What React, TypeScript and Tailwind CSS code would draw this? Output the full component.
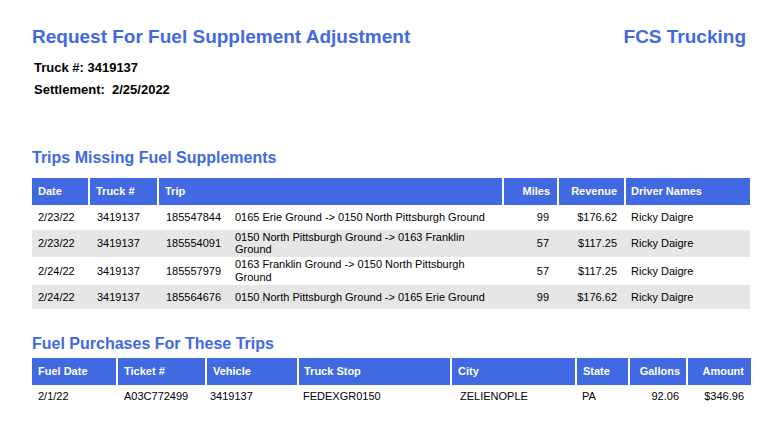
import React from "react";

const trips = [
  { date: "2/23/22", truck: "3419137", id: "185547844", route: "0165 Erie Ground -> 0150 North Pittsburgh Ground", miles: "99", revenue: "$176.62", driver: "Ricky Daigre" },
  { date: "2/23/22", truck: "3419137", id: "185554091", route: "0150 North Pittsburgh Ground -> 0163 Franklin Ground", miles: "57", revenue: "$117.25", driver: "Ricky Daigre" },
  { date: "2/24/22", truck: "3419137", id: "185557979", route: "0163 Franklin Ground -> 0150 North Pittsburgh Ground", miles: "57", revenue: "$117.25", driver: "Ricky Daigre" },
  { date: "2/24/22", truck: "3419137", id: "185564676", route: "0150 North Pittsburgh Ground -> 0165 Erie Ground", miles: "99", revenue: "$176.62", driver: "Ricky Daigre" },
];

const purchases = [
  { date: "2/1/22", ticket: "A03C772499", vehicle: "3419137", stop: "FEDEXGR0150", city: "ZELIENOPLE", state: "PA", gallons: "92.06", amount: "$346.96" },
];

const th = "h-[27px] bg-[#4169e1] text-white font-bold text-[11px] align-middle p-0";
const sep = "border-l-2 border-white";

export default function App() {
  return (
    <div className="min-h-[448px] bg-white pl-[32px] pt-[26px] text-black font-['Liberation_Sans',Arial,sans-serif]">
      <div className="flex justify-between pr-[30px] text-[19px] leading-[22px] font-bold text-[#4169e1]">
        <h1>Request For Fuel Supplement Adjustment</h1>
        <div>FCS Trucking</div>
      </div>

      <div className="mt-[9px] pl-[2px] text-[13px] leading-[22px] font-bold">
        <div>Truck #: 3419137</div>
        <div>Settlement:&nbsp; 2/25/2022</div>
      </div>

      <h2 className="mt-[47px] mb-[10px] text-[16px] leading-[20px] font-bold text-[#4169e1]">
        Trips Missing Fuel Supplements
      </h2>
      <table className="w-[718px] table-fixed border-separate border-spacing-0 text-[11px] leading-[12.6px]">
        <colgroup>
          <col className="w-[56px]" />
          <col className="w-[69px]" />
          <col className="w-[69px]" />
          <col className="w-[276px]" />
          <col className="w-[55px]" />
          <col className="w-[67px]" />
          <col className="w-[126px]" />
        </colgroup>
        <thead>
          <tr>
            <th className={`${th} text-left pl-[6px]`}>Date</th>
            <th className={`${th} ${sep} text-left pl-[6px]`}>Truck #</th>
            <th colSpan={2} className={`${th} ${sep} text-left pl-[6px]`}>Trip</th>
            <th className={`${th} ${sep} text-right pr-[7px]`}>Miles</th>
            <th className={`${th} ${sep} text-right pr-[7px]`}>Revenue</th>
            <th className={`${th} ${sep} text-left pl-[5px]`}>Driver Names</th>
          </tr>
        </thead>
        <tbody>
          {trips.map((t, i) => (
            <tr key={t.id} className={i % 2 === 1 ? "bg-[#e6e6e6]" : ""}>
              <td className="h-[24.5px] py-[1.2px] pl-[6px]">{t.date}</td>
              <td className="py-[1.2px] pl-[9px]">{t.truck}</td>
              <td className="py-[1.2px] pl-[9px]">{t.id}</td>
              <td className="py-[1.2px] pl-[9px] pr-[13px]">{t.route}</td>
              <td className="py-[1.2px] pr-[8px] text-right">{t.miles}</td>
              <td className="py-[1.2px] pr-[7px] text-right">{t.revenue}</td>
              <td className="py-[1.2px] pl-[7px]">{t.driver}</td>
            </tr>
          ))}
        </tbody>
      </table>

      <h2 className="mt-[25px] mb-[4px] text-[16px] leading-[20px] font-bold text-[#4169e1]">
        Fuel Purchases For These Trips
      </h2>
      <table className="w-[719px] table-fixed border-separate border-spacing-0 text-[11px] leading-[12.6px]">
        <colgroup>
          <col className="w-[84px]" />
          <col className="w-[89px]" />
          <col className="w-[92px]" />
          <col className="w-[153px]" />
          <col className="w-[125px]" />
          <col className="w-[53px]" />
          <col className="w-[58px]" />
          <col className="w-[65px]" />
        </colgroup>
        <thead>
          <tr>
            <th className={`${th} text-left pl-[6px]`}>Fuel Date</th>
            <th className={`${th} ${sep} text-left pl-[6px]`}>Ticket #</th>
            <th className={`${th} ${sep} text-left pl-[6px]`}>Vehicle</th>
            <th className={`${th} ${sep} text-left pl-[5px]`}>Truck Stop</th>
            <th className={`${th} ${sep} text-left pl-[6px]`}>City</th>
            <th className={`${th} ${sep} text-left pl-[6px]`}>State</th>
            <th className={`${th} ${sep} text-right pr-[6px]`}>Gallons</th>
            <th className={`${th} ${sep} text-right pr-[7px]`}>Amount</th>
          </tr>
        </thead>
        <tbody>
          {purchases.map((p) => (
            <tr key={p.ticket}>
              <td className="h-[23px] py-px pl-[6px]">{p.date}</td>
              <td className="py-px pl-[8px]">{p.ticket}</td>
              <td className="py-px pl-[5px]">{p.vehicle}</td>
              <td className="py-px pl-[6px]">{p.stop}</td>
              <td className="py-px pl-[10px]">{p.city}</td>
              <td className="py-px pl-[7px]">{p.state}</td>
              <td className="py-px pr-[7px] text-right">{p.gallons}</td>
              <td className="py-px pr-[7px] text-right">{p.amount}</td>
            </tr>
          ))}
        </tbody>
      </table>
    </div>
  );
}
